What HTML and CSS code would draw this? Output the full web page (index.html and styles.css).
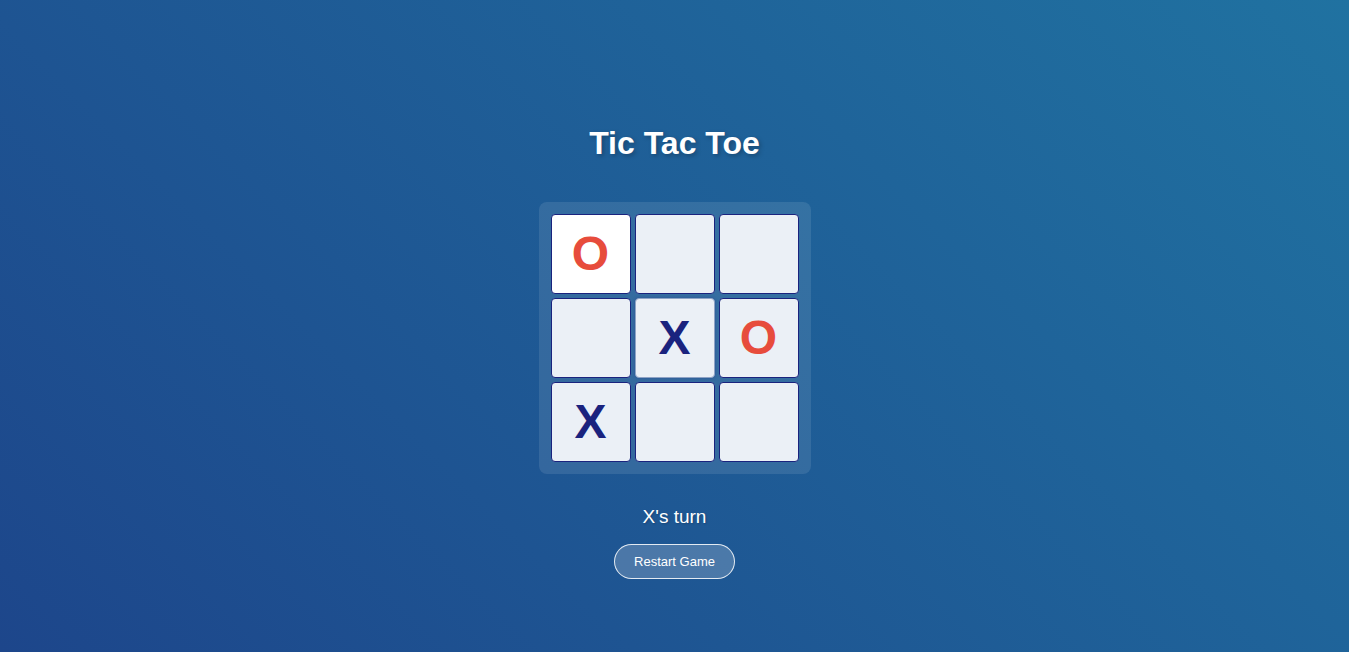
FILE: index.html
```html
<!DOCTYPE html>
<html lang="en">
<head>
<meta charset="utf-8">
<title>Tic Tac Toe</title>
<link rel="stylesheet" href="styles.css">
</head>
<body>
<main class="game">
  <h1 class="title">Tic Tac Toe</h1>
  <div class="board">
    <div class="cell cell-hover"><span class="mark o">O</span></div>
    <div class="cell"></div>
    <div class="cell"></div>
    <div class="cell"></div>
    <div class="cell cell-focus"><span class="mark x">X</span></div>
    <div class="cell"><span class="mark o">O</span></div>
    <div class="cell"><span class="mark x">X</span></div>
    <div class="cell"></div>
    <div class="cell"></div>
  </div>
  <p class="status">X's turn</p>
  <button class="restart">Restart Game</button>
</main>
</body>
</html>
```

FILE: styles.css
```css
html, body {
  margin: 0;
  height: 100%;
}
body {
  background: linear-gradient(45deg, #1d468b 0%, #2072a1 100%);
  font-family: "Liberation Sans", Arial, sans-serif;
  color: #fff;
  overflow: hidden;
}
.game {
  display: flex;
  flex-direction: column;
  align-items: center;
  padding-top: 123px;
}
.title {
  margin: 0;
  font-size: 32px;
  line-height: 40px;
  font-weight: bold;
  text-shadow: 2px 2px 4px rgba(0, 0, 0, 0.25);
}
.board {
  margin-top: 39px;
  display: grid;
  grid-template-columns: repeat(3, 80px);
  grid-template-rows: repeat(3, 80px);
  gap: 4px;
  padding: 12px;
  background: rgba(255, 255, 255, 0.1);
  border-radius: 8px;
}
.cell {
  box-sizing: border-box;
  background: #ebf0f6;
  border: 1px solid #1a237e;
  border-radius: 4px;
  display: flex;
  align-items: center;
  justify-content: center;
}
.cell-hover {
  background: #ffffff;
}
.cell-focus {
  border-color: #8ea3c6;
  box-shadow: 0 0 3px rgba(26, 35, 126, 0.35);
}
.mark {
  font-size: 48px;
  font-weight: bold;
  line-height: 1;
}
.mark.o { color: #e74c3c; }
.mark.x { color: #1a237e; }
.status {
  margin: 31px 0 0;
  font-size: 19px;
  line-height: 24px;
  text-shadow: 1px 1px 2px rgba(0, 0, 0, 0.2);
}
.restart {
  margin-top: 15px;
  font-family: "Liberation Sans", Arial, sans-serif;
  font-size: 13px;
  line-height: 15px;
  color: #fff;
  background: rgba(255, 255, 255, 0.2);
  border: 1px solid rgba(255, 255, 255, 0.85);
  border-radius: 20px;
  padding: 9px 19px;
  cursor: pointer;
}
```
